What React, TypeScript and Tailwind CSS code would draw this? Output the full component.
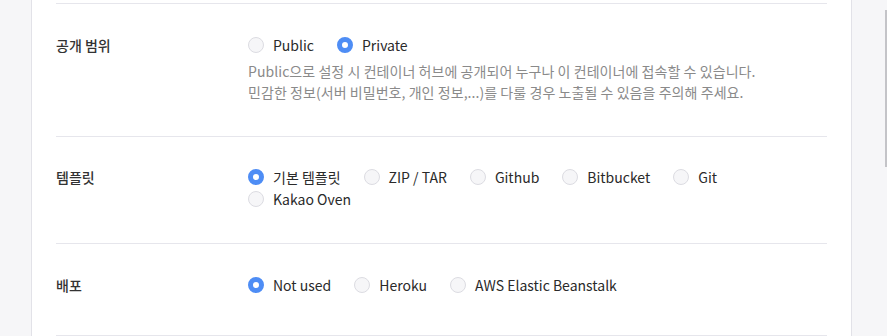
import React, { useState } from 'react';

type Option = { value: string; label: string };

type RadioGroupProps = {
  options: Option[];
  value: string;
  onChange: (v: string) => void;
};

const RadioGroup = ({ options, value, onChange }: RadioGroupProps) => (
  <div className="flex flex-wrap">
    {options.map((o) => {
      const checked = o.value === value;
      return (
        <label key={o.value} onClick={() => onChange(o.value)} className="mr-[23px] flex h-[22px] cursor-pointer items-center">
          <span
            className={`box-border h-4 w-4 rounded-full ${checked ? 'border-[5px] border-[#4e8df5] bg-white' : 'border border-[#dcdce2] bg-[#f6f6f8]'}`}
          />
          <span className="ml-[9px] text-[14px] leading-[22px] text-[#2a2a2a]">{o.label}</span>
        </label>
      );
    })}
  </div>
);

type RowProps = {
  label: string;
  children: React.ReactNode;
  className: string;
};

const Row = ({ label, children, className }: RowProps) => (
  <div className={`flex border-t border-[#e6e6ec] ${className}`}>
    <div className="w-[192px] shrink-0 text-[14px] font-medium leading-[22px] text-[#333]">{label}</div>
    <div className="min-w-0 flex-1">{children}</div>
  </div>
);

export default function App() {
  const [visibility, setVisibility] = useState('private');
  const [template, setTemplate] = useState('default');
  const [deploy, setDeploy] = useState('none');

  return (
    <div
      className="relative flex h-[336px] w-[887px] overflow-hidden bg-[#f6f6f8]"
      style={{ fontFamily: '"Noto Sans CJK KR", "Noto Sans", sans-serif' }}
    >
      <div className="w-[31px] shrink-0" />
      <div className="w-[821px] shrink-0 border-x border-[#e2e2e8] bg-white px-6 pt-[3px]">
        <Row label="공개 범위" className="pt-[30px] pb-[33px]">
          <RadioGroup
            value={visibility}
            onChange={setVisibility}
            options={[
              { value: 'public', label: 'Public' },
              { value: 'private', label: 'Private' },
            ]}
          />
          <p className="mt-[5px] text-[14px] leading-[21px] tracking-[0.06px] text-[#8a8a8a]">
            Public으로 설정 시 컨테이너 허브에 공개되어 누구나 이 컨테이너에 접속할 수 있습니다.
            <br />
            민감한 정보(서버 비밀번호, 개인 정보,...)를 다룰 경우 노출될 수 있음을 주의해 주세요.
          </p>
        </Row>
        <Row label="템플릿" className="pt-[29px] pb-[33px]">
          <RadioGroup
            value={template}
            onChange={setTemplate}
            options={[
              { value: 'default', label: '기본 템플릿' },
              { value: 'zip', label: 'ZIP / TAR' },
              { value: 'github', label: 'Github' },
              { value: 'bitbucket', label: 'Bitbucket' },
              { value: 'git', label: 'Git' },
              { value: 'oven', label: 'Kakao Oven' },
            ]}
          />
        </Row>
        <Row label="배포" className="pt-[30px] pb-[39px]">
          <RadioGroup
            value={deploy}
            onChange={setDeploy}
            options={[
              { value: 'none', label: 'Not used' },
              { value: 'heroku', label: 'Heroku' },
              { value: 'aws', label: 'AWS Elastic Beanstalk' },
            ]}
          />
        </Row>
        <div className="border-t border-[#e6e6ec]" />
      </div>
      <div className="absolute right-0 top-[10px] h-[157px] w-[2px] bg-[#c4c4c8]" />
    </div>
  );
}
